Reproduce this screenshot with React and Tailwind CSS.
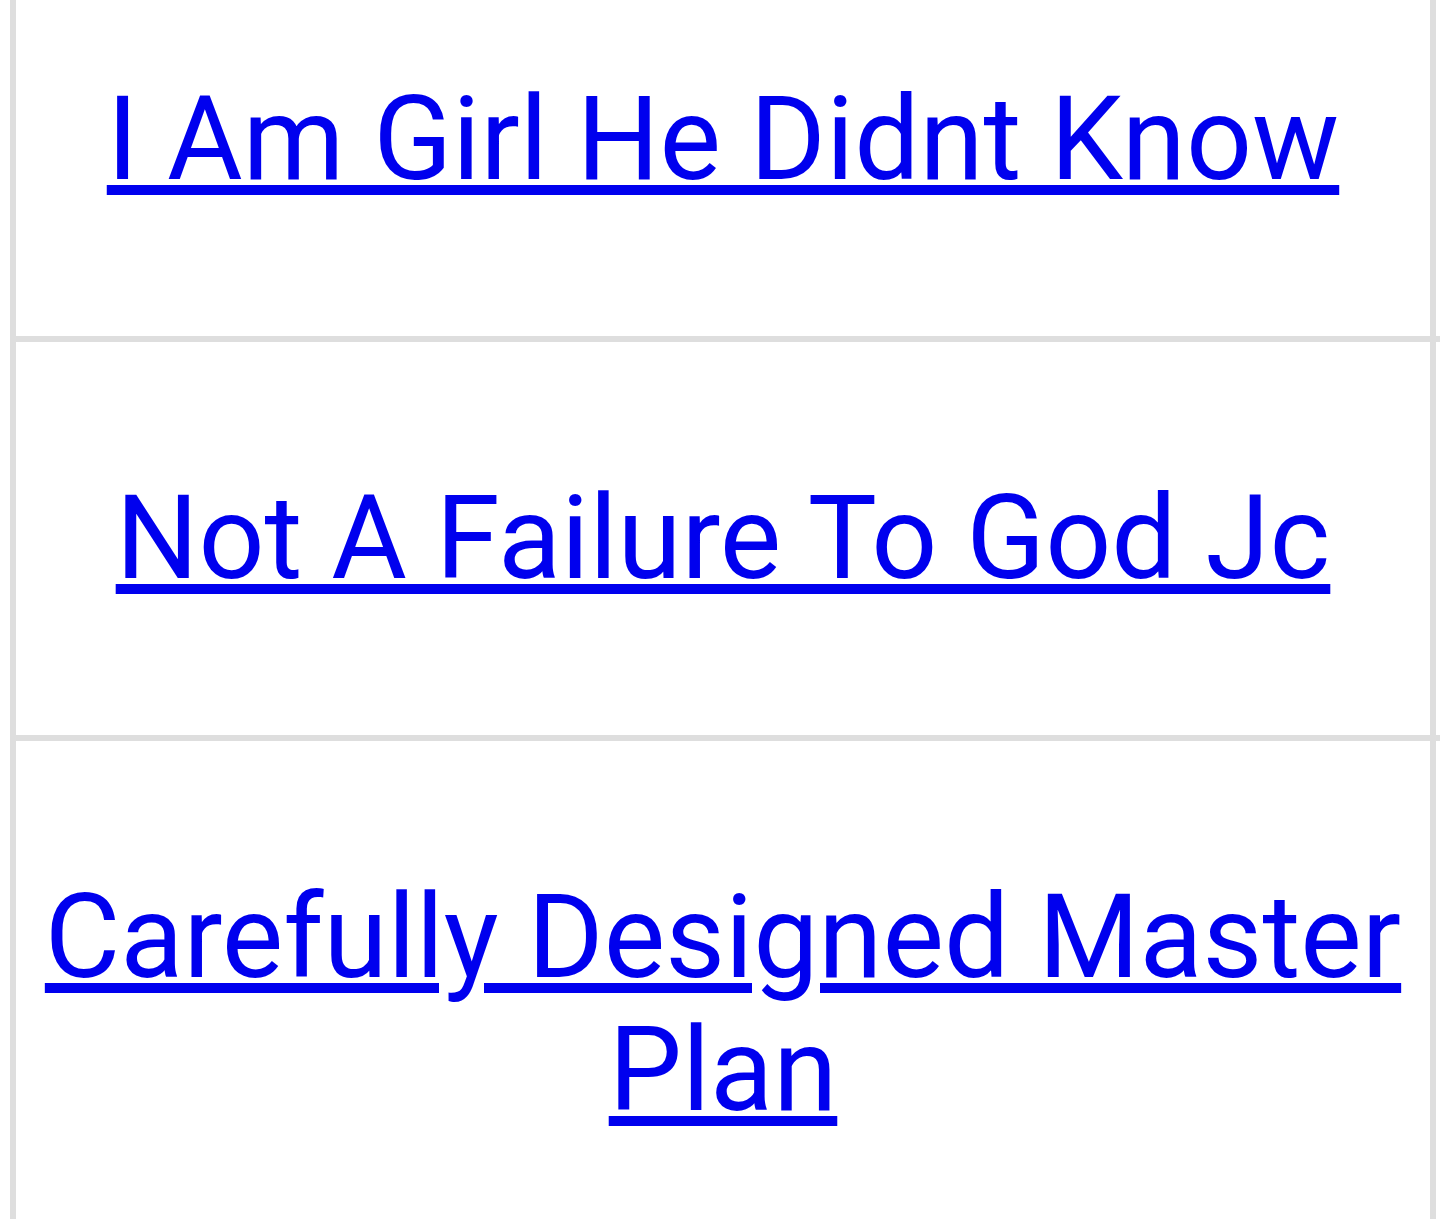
import React from 'react';

const titles = [
  'I Am Girl He Didnt Know',
  'Not A Failure To God Jc',
  'Carefully Designed Master Plan',
];

export default function App() {
  return (
    <div className="h-screen w-full overflow-hidden bg-white">
      {/* list table, scrolled so the first row is partly above the top */}
      <div className="ml-[10px] -mt-[63px] w-[1500px] border-l-[6px] border-t-[6px] border-[#dedede]">
        {titles.map((t) => (
          <div key={t} className="flex">
            <div className="w-[1420px] shrink-0 border-r-[6px] border-b-[6px] border-[#dedede] px-[20px] py-[130px] text-center">
              <a
                href="#"
                className="text-[116px] leading-[133px] text-[#0000ee] underline decoration-[10px] underline-offset-[6px]"
                style={{ fontFamily: 'Roboto, "Noto Sans", sans-serif' }}
              >
                {t}
              </a>
            </div>
            <div className="flex-1 border-r-[6px] border-b-[6px] border-[#dedede]" />
          </div>
        ))}
      </div>
    </div>
  );
}
